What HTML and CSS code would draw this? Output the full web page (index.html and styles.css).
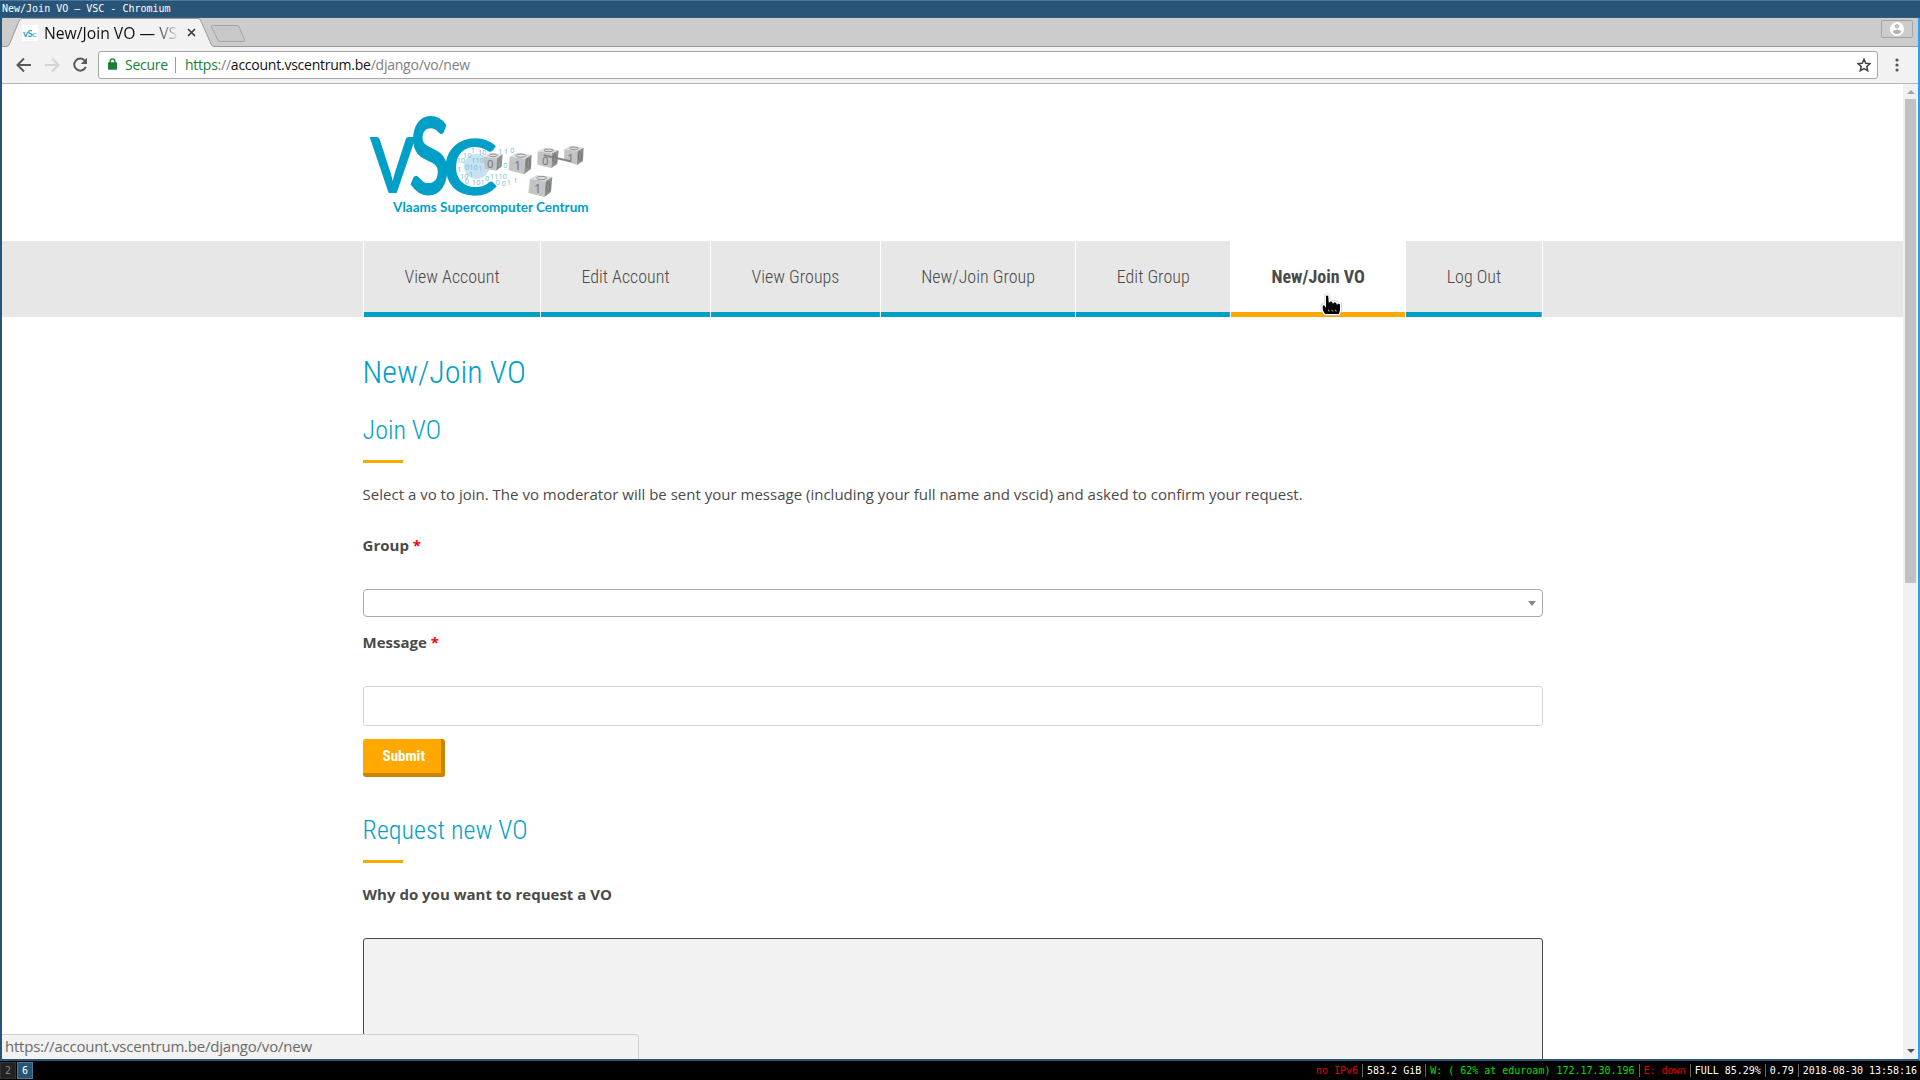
FILE: index.html
```html
<!DOCTYPE html>
<html lang="en">
<head>
<meta charset="utf-8">
<title>New/Join VO — VSC</title>
<link rel="stylesheet" href="styles.css">
</head>
<body>
<div class="window">
  <div class="titlebar">New/Join VO — VSC - Chromium</div>
  <div class="browser">
    <div class="tabstrip">
      <svg class="tab-shapes" width="260" height="29" viewBox="0 0 260 29">
        <path d="M0 28.5H4Q6.500 28.500 7.500 26L17 3Q18.500 .5 20.500 .5H196Q198 .5 199 3L209 26Q210 28.500 213 28.500V29H0Z" fill="#f2f2f2"/>
        <path d="M0 28.500H4Q6.500 28.500 7.500 26L17 3Q18.500 .5 20.500 .5H196Q198 .5 199 3L209 26Q210 28.500 212 28.500H260" fill="none" stroke="#999"/>
        <path d="M210.500 7.500H235Q236.500 7.500 237.200 9L242.500 21.500Q243 23.500 241.500 23.500H218Q216.500 23.500 215.800 22L209.500 9Q209 7.500 210.500 7.500Z" fill="#c8c8c8" stroke="#a5a5a5"/>
      </svg>
      <div class="tab">
        <svg class="favicon" width="16" height="16" viewBox="0 0 16 16">
          <rect width="16" height="16" fill="#fff"/>
          <text x="1" y="11.500" font-size="8.500" textLength="5" lengthAdjust="spacingAndGlyphs">v</text>
          <text x="5.500" y="11.500" font-size="10" textLength="5" lengthAdjust="spacingAndGlyphs">S</text>
          <text x="10" y="11.500" font-size="8" textLength="5" lengthAdjust="spacingAndGlyphs" opacity=".7">c</text>
        </svg>
        <span class="tab-title">New/Join VO — VSC</span>
        <svg class="tab-close" width="9" height="9" viewBox="0 0 9 9"><path d="M1 1L8 8M8 1L1 8" stroke="#3c3c3c" stroke-width="1.700"/></svg>
      </div>
      <div class="avatar">
        <svg width="14" height="14" viewBox="0 0 14 14"><circle cx="7" cy="7" r="7" fill="#fff"/><circle cx="7" cy="4.300" r="1.800" fill="#ccc" stroke="#a5a5a5" stroke-width=".8"/><path d="M3 9.300Q7 6.600 11 9.300Q10 11.800 7 11.800T3 9.300Z" fill="#b5b5b5" stroke="#a5a5a5" stroke-width=".6"/></svg>
      </div>
    </div>
    <div class="toolbar">
      <svg class="tool" width="16" height="16" viewBox="0 0 16 16"><path d="M15 8H2M8 1.500L1.500 8L8 14.500" fill="none" stroke="#5a5a5a" stroke-width="2"/></svg>
      <svg class="tool" width="16" height="16" viewBox="0 0 16 16"><path d="M1 8H14M8 1.500L14.500 8L8 14.500" fill="none" stroke="#d4d4d4" stroke-width="2"/></svg>
      <svg class="tool" width="16" height="16" viewBox="0 0 16 16"><path d="M13 4A6 6 0 1 0 13.800 9.800" fill="none" stroke="#5a5a5a" stroke-width="2"/><path d="M15 .8V7H8.800Z" fill="#5a5a5a"/></svg>
      <div class="omnibox">
        <svg class="lock" width="9" height="12" viewBox="0 0 9 12"><path d="M2.200 5V3.200A2.300 2.300 0 0 1 6.800 3.200V5" fill="none" stroke="#188038" stroke-width="1.400"/><rect y="4.200" width="9" height="7.500" rx=".8" fill="#188038"/></svg>
        <span class="secure">Secure</span>
        <span class="divider"></span>
        <span class="url"><span class="scheme">https</span>://<span class="host">account.vscentrum.be</span>/django/vo/new</span>
        <svg class="star" width="14" height="14" viewBox="0 0 14 14"><path d="M7 1.300L8.700 5.200L13 5.600L9.800 8.500L10.700 12.700L7 10.500L3.300 12.700L4.200 8.500L1 5.600L5.300 5.200Z" fill="none" stroke="#444" stroke-width="1.500"/></svg>
      </div>
      <svg class="menu" width="4" height="14" viewBox="0 0 4 14" fill="#555"><circle cx="2" cy="2" r="1.600"/><circle cx="2" cy="7" r="1.600"/><circle cx="2" cy="12" r="1.600"/></svg>
    </div>
    <div class="viewport">
      <div class="page">
        <header class="header">
          <svg class="logo" width="247" height="130" viewBox="39 0 741 390">
            <circle cx="380" cy="199" r="38" fill="#c9e2f2"/>
            <g class="mark">
              <text transform="translate(60 280) scale(1.960 2.320)" font-weight="700">V</text>
              <text transform="translate(180 279) scale(2.160 3.080)" stroke="#009fc7" stroke-width="4">S</text>
              <text transform="translate(279 281) scale(2.420 2.280)" stroke="#009fc7" stroke-width="3">C</text>
            </g>
            <g class="bits">
              <text x="362" y="160">1</text><text x="384" y="164">10</text><text x="339" y="173">10</text><text x="445" y="163">1</text><text x="462" y="162">1</text><text x="481" y="160">0</text>
              <text x="320" y="190">10</text><text x="364" y="188">110</text><text x="345" y="211">010</text><text x="385" y="214">1</text><text x="322" y="215">1</text><text x="460" y="204">0</text>
              <text x="330" y="238">10</text><text x="357" y="232">1</text><text x="366" y="255">101</text><text x="344" y="253">0</text><text x="405" y="243">0</text><text x="420" y="236">1110</text>
              <text x="437" y="256">0</text><text x="455" y="258">0</text><text x="470" y="256">1</text><text x="490" y="248">1</text>
            </g>
            <g class="cubes">
              <path d="M401 170L420 158L458 163L441 175Z" fill="#dcdddd"/><path d="M401 170L441 175L438 212L403 206Z" fill="#c3c4c5"/><path d="M441 175L458 163L455 200L438 212Z" fill="#8e9092"/>
              <path d="M479 170L500 158L545 164L526 176Z" fill="#dcdddd"/><path d="M479 170L526 176L522 223L476 211Z" fill="#c3c4c5"/><path d="M526 176L545 164L543 207L522 223Z" fill="#8e9092"/>
              <path d="M563 154L584 144L626 151L606 160Z" fill="#dcdddd"/><path d="M563 154L606 160L604 204L562 194Z" fill="#c3c4c5"/><path d="M606 160L626 151L622 192L604 204Z" fill="#8e9092"/>
              <path d="M643 148L661 137L701 143L682 154Z" fill="#dcdddd"/><path d="M643 148L682 154L681 195L642 182Z" fill="#c3c4c5"/><path d="M682 154L701 143L699 183L681 195Z" fill="#8e9092"/>
              <path d="M540 237L560 225L607 231L587 243Z" fill="#dcdddd"/><path d="M540 237L587 243L583 291L535 279Z" fill="#c3c4c5"/><path d="M587 243L607 231L603 276L583 291Z" fill="#8e9092"/>
              <path d="M581 166L662 184" stroke="#85878a" stroke-width="6"/>
              <g fill="none" stroke="#909294" stroke-width="3"><ellipse cx="430" cy="166" rx="12" ry="4"/><ellipse cx="513" cy="167" rx="15" ry="5"/><ellipse cx="596" cy="151" rx="14" ry="4"/><ellipse cx="672" cy="145" rx="13" ry="4"/><ellipse cx="575" cy="234" rx="15" ry="5"/></g>
              <g fill="none" stroke="#6f7173" stroke-width="3"><ellipse cx="535" cy="190" rx="5" ry="14"/><ellipse cx="614" cy="176" rx="5" ry="13"/><ellipse cx="690" cy="168" rx="5" ry="13"/><ellipse cx="595" cy="260" rx="5" ry="15"/></g>
              <text x="411" y="203" font-size="34">0</text><text x="492" y="211" font-size="38">1</text><text x="576" y="195" font-size="34">0</text><text x="652" y="187" font-size="34">1</text><text x="552" y="279" font-size="38">1</text>
            </g>
            <text class="tagline" x="129" y="335" textLength="587" lengthAdjust="spacingAndGlyphs">Vlaams Supercomputer Centrum</text>
          </svg>
        </header>
        <nav class="nav">
          <a class="nav-item">View Account</a>
          <a class="nav-item">Edit Account</a>
          <a class="nav-item">View Groups</a>
          <a class="nav-item">New/Join Group</a>
          <a class="nav-item">Edit Group</a>
          <a class="nav-item active">New/Join VO</a>
          <a class="nav-item">Log Out</a>
          <span class="nav-end"></span>
        </nav>
        <main class="content">
          <h1>New/Join VO</h1>
          <h2 class="first">Join VO</h2>
          <p>Select a vo to join. The vo moderator will be sent your message (including your full name and vscid) and asked to confirm your request.</p>
          <label>Group <span class="req">*</span></label>
          <div class="select"><span class="caret"></span></div>
          <label>Message <span class="req">*</span></label>
          <div class="input"></div>
          <div class="submit">Submit</div>
          <h2 class="second">Request new VO</h2>
          <label>Why do you want to request a VO</label>
          <div class="textarea"></div>
        </main>
      </div>
      <div class="scrollbar"><span class="arrow-up"></span><span class="thumb"></span><span class="arrow-down"></span></div>
      <div class="status-bubble">https://account.vscentrum.be/django/vo/new</div>
    </div>
  </div>
  <div class="i3bar">
    <span class="workspace">2</span><span class="workspace focused">6</span>
    <div class="blocks">
      <span class="bad">no IPv6</span><span>583.2 GiB</span><span class="good">W: ( 62% at eduroam) 172.17.30.196</span><span class="bad">E: down</span><span>FULL 85.29%</span><span>0.79</span><span>2018-08-30 13:58:16</span>
    </div>
  </div>
  <svg class="cursor" width="24" height="26" viewBox="0 0 24 26">
    <path d="M6 3Q7.200 1.800 8.200 3L8.800 10L10 8.500L12 8.700L13 11L14 9.200L16 9.700L17 12L18 10.500L20 11.500V17L18.800 21H5L2.800 17V12.500L4.500 12.500L6 15Z" fill="#000" stroke="#999" stroke-width="4" stroke-linejoin="round" opacity=".5"/>
    <path d="M6 3Q7.200 1.800 8.200 3L8.800 10L10 8.500L12 8.700L13 11L14 9.200L16 9.700L17 12L18 10.500L20 11.500V17L18.800 21H5L2.800 17V12.500L4.500 12.500L6 15Z" fill="#000" stroke="#fff" stroke-width="2.600" stroke-linejoin="round"/>
    <path d="M6 3Q7.200 1.800 8.200 3L8.800 10L10 8.500L12 8.700L13 11L14 9.200L16 9.700L17 12L18 10.500L20 11.500V17L18.800 21H5L2.800 17V12.500L4.500 12.500L6 15Z"/>
    <path d="M8.500 16.500V18H10M12 16.500V18H13.500M15.500 16.500V18H17" fill="none" stroke="#bbb" stroke-width=".7"/>
  </svg>
</div>
</body>
</html>
```
FILE: styles.css
```css
* { box-sizing: border-box; }
body { margin: 0; background: #000; overflow: hidden; }

.window { position: relative; display: flex; flex-direction: column; width: 1920px; height: 1080px; }
.titlebar {
  height: 18px; padding-left: 2px; flex: none;
  background: #285577; border-top: 1px solid #4c7899; border-bottom: 1px solid #355f80;
  color: #fff; font: 10px/15px "DejaVu Sans Mono", monospace; white-space: pre;
}
.browser {
  display: flex; flex-direction: column; height: 1043px; flex: none;
  border: solid #285577; border-width: 0 2px 2px; border-right-color: #2e9ef4;
  font-family: "Open Sans", "Noto Sans", sans-serif;
}

.tabstrip { position: relative; display: flex; justify-content: space-between; height: 29px; background: #ccc; border-bottom: 1px solid #999; flex: none; }
.tab-shapes { position: absolute; left: 0; top: 0; }
.tab { position: relative; display: flex; align-items: center; height: 29px; padding-left: 20px; }
.favicon { font-family: Lato, sans-serif; font-weight: 700; fill: #1a9cc0; }
.tab-title {
  width: 134px; margin: 0 9px 0 6px; overflow: hidden; white-space: nowrap;
  font-size: 15.7px; line-height: 24px; color: #111;
  -webkit-mask-image: linear-gradient(90deg, #000 108px, transparent 136px);
  mask-image: linear-gradient(90deg, #000 108px, transparent 136px);
}
.avatar { display: flex; align-items: center; justify-content: center; width: 32px; height: 18px; margin: 2px 5px 0 0; border: 1px solid #a5a5a5; border-radius: 2px; }

.toolbar { display: flex; align-items: center; height: 37px; padding-left: 14px; background: #f2f2f2; border-bottom: 1px solid #b5b5b5; flex: none; }
.tool { flex: none; margin-right: 12px; }
.tool + .omnibox { margin-left: -2px; }
.omnibox {
  display: flex; align-items: center; flex: none; width: 1780px; height: 28px; padding: 0 6px 0 9px; margin-right: 17px;
  background: #fff; border: 1px solid #a6a6a6; border-radius: 3px; font-size: 14px; line-height: 24px; letter-spacing: -.24px;
}
.lock { margin-top: -2px; }
.secure { width: 42px; margin-left: 8px; color: #188038; }
.divider { flex: none; width: 1px; height: 16px; margin: 0 9px 0 8px; background: #9a9a9a; }
.url { flex: 1; color: #808080; }
.scheme { color: #188038; }
.host { color: #111; }

.viewport { position: relative; display: flex; height: 975px; background: #fff; overflow: hidden; }
.page { width: 1901px; height: 975px; overflow: hidden; color: #4a4a4a; }
.scrollbar { display: flex; flex-direction: column; align-items: center; width: 15px; height: 975px; padding: 6px 0; background: #f1f1f1; }
.arrow-up, .arrow-down { border: 4px solid transparent; }
.arrow-up { border-top: 0; border-bottom-color: #a3a3a3; }
.arrow-down { border-bottom: 0; border-top-color: #505050; margin-top: auto; }
.thumb { width: 11px; height: 484px; margin-top: 5px; background: #c1c1c1; }
.status-bubble {
  position: absolute; left: 0; bottom: 0; width: 637px; height: 25px; padding-left: 3px;
  background: #f2f2f2; border: solid #d0d0d0; border-width: 1px 1px 0 0; border-radius: 0 4px 0 0;
  font-size: 15px; line-height: 22px; letter-spacing: -.22px; color: #6a6a6a;
}

.header { height: 157px; padding: 16px 0 0 361px; }
.logo { display: block; fill: #009fc7; font-family: Lato, sans-serif; }
.mark { font-size: 100px; }
.bits { font: 22px "Noto Sans", sans-serif; fill: #79bdd9; }
.cubes { font-family: "Noto Sans", sans-serif; }
.cubes text { fill: #77797b; }
.tagline { font: 700 41px Lato, sans-serif; }

.nav { display: flex; height: 76px; padding-left: 361px; background: #e7e7e7; }
.nav-item {
  height: 76px; padding: 0 40.41px; border-left: 1px solid #fff;
  background: linear-gradient(#009fc7, #009fc7) bottom / 100% 5px no-repeat;
  background-clip: padding-box;
  font: 300 18px/71px "Roboto Condensed", Roboto, sans-serif; color: #4a4a4a; white-space: nowrap;
}
.nav-item.active { font-weight: 700; background: linear-gradient(#ffa800, #ffa800) bottom / 100% 5px no-repeat #fff; }
.nav-end { width: 1px; background: #fff; }

.content { width: 1180px; margin-left: 360.6px; font-size: 15px; line-height: 24px; }
h1, h2 { font-family: "Roboto Condensed", Roboto, sans-serif; font-weight: 300; color: #009fc7; }
h1 { margin: 35px 0 0; font-size: 32px; line-height: 40px; }
h2 { font-size: 26px; line-height: 32px; }
h2::after { content: ""; display: block; width: 40px; height: 3px; margin-top: 14px; background: #ffa800; }
.first { margin: 22px 0 19px; }
.second { margin: 37px 0 19px; }
p { margin: 0 0 27px; letter-spacing: .007px; }
label { display: block; font-weight: 700; margin-bottom: 32px; }
.req { color: #f00; }
.select { display: flex; align-items: center; justify-content: flex-end; height: 28px; padding-right: 6px; border: 1px solid #aaa; border-radius: 4px; margin-bottom: 13px; }
.caret { border: 4px solid transparent; border-top: 5px solid #888; border-bottom: 0; }
.input { height: 40px; border: 1px solid #d4d4d4; border-radius: 3px; margin-bottom: 13px; }
.submit {
  width: 82px; height: 38px; padding-left: 20px; border-radius: 3px;
  background: #ffa800; border: solid #c98500; border-width: 0 4px 4px 0;
  font: 700 15px/34px "Roboto Condensed", Roboto, sans-serif; color: #fff;
}
.textarea { height: 160px; background: #f2f2f2; border: 1px solid #4a4a4a; border-radius: 3px; }

.i3bar { display: flex; align-items: center; height: 19px; background: #000; color: #fff; font: 10px/13px "DejaVu Sans Mono", monospace; letter-spacing: -.01px; white-space: pre; }
.workspace { width: 16px; height: 17px; line-height: 15px; margin-right: 1px; border: 1px solid #333; background: #222; color: #888; text-align: center; }
.focused { background: #285577; border-color: #4c7899; color: #fff; }
.blocks { display: flex; margin-left: auto; padding-right: 3px; }
.blocks span + span { margin-left: 4px; padding-left: 4px; border-left: 1px solid #666; }
.bad { color: #e00000; }
.good { color: #00e000; }

.cursor { position: absolute; left: 1320px; top: 293px; }
```
